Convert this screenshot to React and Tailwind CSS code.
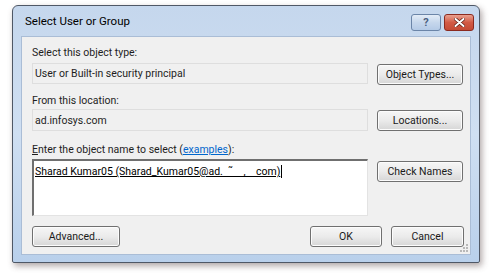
import React from "react";

const font = { fontFamily: 'Roboto, "Open Sans", sans-serif' };

function Btn({ children, className = "" }) {
  return (
    <div
      className={
        "h-[21px] flex items-center justify-center rounded-[3px] border border-[#707070] bg-gradient-to-b from-[#f6f6f6] via-[#ebebeb] to-[#d6d6d6] shadow-[inset_0_0_0_1px_#fcfcfc] text-[10.5px] text-[#1a1a1a] " +
        className
      }
    >
      {children}
    </div>
  );
}

export default function App() {
  return (
    <div className="w-[491px] h-[274px] bg-white pt-[5px] pl-[12px] overflow-hidden" style={font}>
      <div className="w-[468px] h-[258px] flex flex-col rounded-t-[6px] rounded-b-[2px] border border-[#4f5866] bg-gradient-to-b from-[#c5d7ed] via-[#cfdff2] to-[#b9d0eb] shadow-[2px_3px_6px_rgba(80,60,60,0.45)]">
        <div className="h-[30px] flex items-start pl-[12px] pr-[5px]">
          <div className="mt-[8px] text-[11.5px] leading-[15px] text-black flex-1">Select User or Group</div>
          <div className="mt-[8px] w-[30px] h-[17px] rounded-[3px] border border-[#6b85a8] bg-gradient-to-b from-[#e3ecf7] via-[#c6d7ec] to-[#b4cae6] flex items-center justify-center text-[11px] font-bold text-[#4a5f80] leading-none">
            ?
          </div>
          <div className="mt-[8px] ml-[3px] w-[30px] h-[17px] rounded-[3px] border border-[#8b2a1f] bg-gradient-to-b from-[#e9a08f] via-[#d25a45] to-[#c44a35] flex items-center justify-center">
            <svg width="11" height="9" viewBox="0 0 11 9">
              <path d="M1.5 1 L9.5 8 M9.5 1 L1.5 8" stroke="#5a1a12" strokeWidth="3.4" strokeLinecap="round" />
              <path d="M1.5 1 L9.5 8 M9.5 1 L1.5 8" stroke="#ffffff" strokeWidth="2" strokeLinecap="round" />
            </svg>
          </div>
        </div>
        <div className="relative mx-[8px] h-[219px] bg-[#f0f0f0] border border-[#aabdd6] pl-[10px] pr-[6px] flex flex-col text-[10.5px] text-[#1e1e1e]">
          <div className="mt-[8px] h-[15px] leading-[15px]">Select this object type:</div>
          <div className="mt-[3px] flex items-start gap-[9px]">
            <div className="w-[336px] h-[21px] border border-[#dedede] flex items-center pl-[2px] leading-[15px]">
              User or Built-in security principal
            </div>
            <Btn className="mt-[1px] w-[86px]">Object Types...</Btn>
          </div>
          <div className="mt-[8px] h-[15px] leading-[15px]">From this location:</div>
          <div className="mt-[1px] flex items-start gap-[9px]">
            <div className="w-[336px] h-[22px] border border-[#dedede] flex items-center pl-[2px] leading-[15px]">
              ad.infosys.com
            </div>
            <Btn className="mt-[1px] w-[86px]">Locations...</Btn>
          </div>
          <div className="mt-[11px] h-[15px] leading-[15px]">
            <span className="underline">E</span>nter the object name to select (
            <span className="text-[#0066cc] underline">examples</span>):
          </div>
          <div className="mt-[2px] flex items-start gap-[9px]">
            <div className="w-[336px] h-[57px] bg-white border-t-2 border-l-2 border-t-[#6f6f6f] border-l-[#6f6f6f] border-b border-r border-b-[#e3e3e3] border-r-[#e3e3e3] pl-[1px] pt-[3px]">
              <span className="underline leading-[15px] text-black whitespace-pre border-r border-black pr-[1px]">
                {"Sharad Kumar05 (Sharad_Kumar05@ad.  ˜    ,    com)"}
              </span>
            </div>
            <Btn className="mt-[2px] w-[86px]">Check Names</Btn>
          </div>
          <div className="mt-[10px] flex items-start">
            <Btn className="w-[88px]">Advanced...</Btn>
            <div className="flex-1" />
            <Btn className="w-[72px]">OK</Btn>
            <Btn className="ml-[9px] w-[73px]">Cancel</Btn>
          </div>
          <svg className="absolute right-[1px] bottom-[1px]" width="10" height="10" viewBox="0 0 10 10">
            <g fill="#b8b8b8">
              <rect x="7" y="1" width="2" height="2" />
              <rect x="4" y="4" width="2" height="2" />
              <rect x="7" y="4" width="2" height="2" />
              <rect x="1" y="7" width="2" height="2" />
              <rect x="4" y="7" width="2" height="2" />
              <rect x="7" y="7" width="2" height="2" />
            </g>
          </svg>
        </div>
      </div>
    </div>
  );
}
